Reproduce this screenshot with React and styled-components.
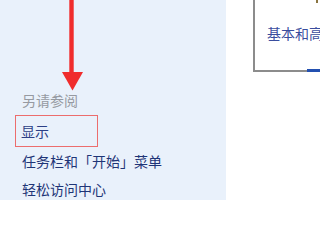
import React from "react";
import styled, { createGlobalStyle } from "styled-components";

const Global = createGlobalStyle`
  html, body { margin: 0; padding: 0; background: #ffffff; overflow: hidden; }
  body { width: 320px; height: 200px; }
  #root { width: 320px; height: 200px; overflow: hidden; }
`;

const Page = styled.div`
  position: relative;
  display: flex;
  width: 320px;
  height: 200px;
  overflow: hidden;
  font-family: "Noto Sans CJK SC", "Noto Sans", sans-serif;
  font-size: 14px;
`;

const Sidebar = styled.nav`
  width: 226px;
  flex: none;
  background: #e9f1fb;
  padding: 85px 0 0 15px;
  box-sizing: border-box;
  display: flex;
  flex-direction: column;
  align-items: flex-start;
`;

const Heading = styled.div`
  height: 30px;
  line-height: 30px;
  padding-left: 7px;
  color: #969aa1;
`;

const Link = styled.div`
  box-sizing: border-box;
  color: #1f3577;
  white-space: nowrap;
  padding-left: 7px;
  height: 28px;
  line-height: 28px;
  cursor: pointer;
`;

const BoxedLink = styled(Link)`
  width: 83px;
  height: 33px;
  line-height: 30px;
  padding-left: 5px;
  color: #2b3f86;
  border: 1.5px solid #ec6d6d;
`;

const Main = styled.main`
  flex: 1;
  min-width: 0;
  overflow: hidden;
  background: #ffffff;
  padding-left: 27px;
`;

const Card = styled.div`
  position: relative;
  width: 300px;
  height: 72px;
  box-sizing: border-box;
  border-left: 2px solid #8c8c8c;
  border-bottom: 2px solid #8c8c8c;
  background: #ffffff;
  padding: 24px 0 0 12px;
`;

const CardText = styled.div`
  color: #3a4d9e;
  white-space: nowrap;
  line-height: 18px;
`;

const CardBar = styled.div`
  position: absolute;
  left: 52px;
  bottom: -2px;
  width: 60px;
  height: 3px;
  background: #2350b0;
`;

const TopMark = styled.div`
  position: absolute;
  left: 61px;
  top: 0;
  width: 2px;
  height: 3px;
  background: #8a7440;
`;

const Arrow = styled.svg`
  position: absolute;
  left: 60px;
  top: 0;
`;

export default function App() {
  return (
    <>
      <Global />
      <Page>
        <Sidebar>
          <Heading>另请参阅</Heading>
          <BoxedLink>显示</BoxedLink>
          <Link>任务栏和「开始」菜单</Link>
          <Link>轻松访问中心</Link>
        </Sidebar>
        <Main>
          <Card>
            <TopMark />
            <CardText>基本和高级设置</CardText>
            <CardBar />
          </Card>
        </Main>
        <Arrow width="26" height="92" viewBox="0 0 26 92">
          <rect x="9.3" y="0" width="4.4" height="73" fill="#f02c2c" />
          <polygon points="2,72 23,72 12.5,90.5" fill="#f02c2c" />
        </Arrow>
      </Page>
    </>
  );
}
